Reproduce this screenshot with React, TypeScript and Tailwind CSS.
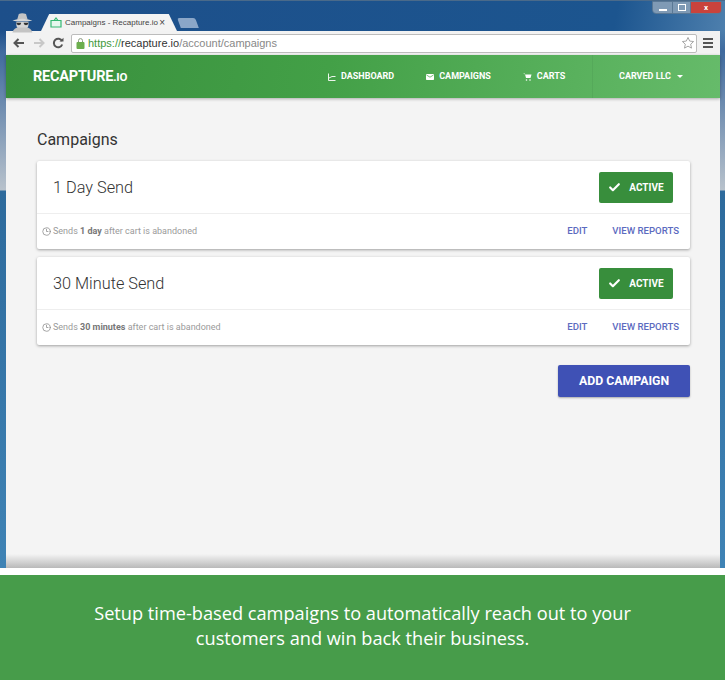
import { Check, Clock3 } from 'lucide-react';

const CAMPAIGNS = [
  { name: '1 Day Send', when: '1 day' },
  { name: '30 Minute Send', when: '30 minutes' },
];

function Incognito() {
  return (
    <svg width="24" height="22" viewBox="0 0 30 26">
      <path d="M9 10 L11 3 Q15 1 20 3 L22 10 Z" fill="#c4c4c4" />
      <path d="M3 11 Q15 7 28 11 Q15 14 3 11Z" fill="#d8d8d8" />
      <path d="M8 13 H23 Q24 20 19 23 H12 Q7 20 8 13Z" fill="#d6d6d6" />
      <path d="M3 26 Q5 20 11 20 H20 Q26 20 28 26Z" fill="#c4c4c4" />
      <path d="M8 14 H14 Q14 17 11 17 Q8 17 8 14Z M17 14 H23 Q23 17 20 17 Q17 17 17 14Z" fill="#333" />
    </svg>
  );
}

function CampaignCard({ name, when }: { name: string; when: string }) {
  return (
    <div className="bg-white rounded-[2px] shadow-[0_1px_3px_rgba(0,0,0,0.35)]">
      <div className="h-[53px] flex items-center justify-between pl-4 pr-[17px] border-b border-[#eeeeee]">
        <span className="pt-[2px] text-[16.3px] font-light text-[#333]">{name}</span>
        <span className="w-[74px] h-[31px] bg-[#388e3c] rounded-[2px] flex items-center justify-center gap-2 text-white text-[10px] font-bold">
          <Check size={13} strokeWidth={4} />
          ACTIVE
        </span>
      </div>
      <div className="h-[35px] flex items-center pl-[5px] pr-[11px] text-[9px]">
        <Clock3 size={9} className="text-[#888] mr-[2px]" />
        <span className="text-[#9a9a9a]">
          Sends <b className="text-[#777] font-bold">{when}</b> after cart is abandoned
        </span>
        <a className="ml-auto text-[#5c6bc0] text-[9.6px] font-medium">EDIT</a>
        <a className="ml-[25px] text-[#5c6bc0] text-[9.6px] font-medium">VIEW REPORTS</a>
      </div>
    </div>
  );
}

export default function App() {
  return (
    <div className="w-[725px] h-[680px] bg-white overflow-hidden font-['Roboto',sans-serif]">
      <div className="h-[568px] pl-[6px] pr-[5px] flex flex-col border-t border-[#4a6a8a] bg-[linear-gradient(to_bottom,transparent_30px,#3f6a9e_50px,#b8c2cc_189px,#2d6a9c_190px,#3f83b5_100%),linear-gradient(100deg,#1d4f8a_0%,#1c558f_75%,#5a8ab5_92%,#86a5c2_100%)]">
        <div className="h-[30px] flex items-end relative">
          <div className="ml-[4px] mb-[-2px]"><Incognito /></div>
          <div className="ml-[7px] w-[136px] h-[17px] bg-[#f3f3f3] [clip-path:polygon(0_100%,6%_0,94%_0,100%_100%)] flex items-center pl-[9px] pr-[12px] text-[8px] text-[#444] whitespace-nowrap font-['Liberation_Sans',sans-serif]">
            <svg width="12" height="11" viewBox="0 0 12 11" className="mr-[3px] shrink-0">
              <path d="M1 3.5 H11 V10 H1Z M4 3.5 L6 1 L8 3.5" fill="#e6f7ee" stroke="#35b873" strokeWidth="1.2" />
            </svg>
            Campaigns - Recapture.io
            <span className="ml-auto text-[10px] leading-none">×</span>
          </div>
          <div className="ml-[2px] mb-[3px] w-[18px] h-[10px] bg-[#8aa6c8] rounded-t-[2px] skew-x-[20deg]" />
          <div className="absolute top-0 right-[-2px] w-[70px] h-[13px] flex rounded-b-[4px] border border-[#5a7895] overflow-hidden">
            <span className="w-[19px] bg-[#7f9ab5] flex items-end justify-center pb-[2px]"><i className="w-[8px] h-[2px] bg-white" /></span>
            <span className="w-[19px] bg-[#7f9ab5] border-x border-[#5a7895] flex items-center justify-center"><i className="w-[8px] h-[7px] border border-white" /></span>
            <span className="flex-1 bg-[#c9433c] text-white text-[8px] font-bold leading-[12px] text-center">x</span>
          </div>
        </div>
        <div className="h-[24px] bg-[#f2f2f2] flex items-center pl-[7px] pr-[7px] text-[#555]">
          <svg width="12" height="10" viewBox="0 0 12 10"><path d="M11 5H2M5.5 1 L1.5 5 L5.5 9" fill="none" stroke="#555" strokeWidth="2" /></svg>
          <svg width="12" height="10" viewBox="0 0 12 10" className="ml-[8px]"><path d="M1 5H10M6.5 1 L10.5 5 L6.5 9" fill="none" stroke="#c8c8c8" strokeWidth="2" /></svg>
          <svg width="12" height="12" viewBox="0 0 12 12" className="ml-[7px]"><path d="M10 4 A4.3 4.3 0 1 0 10.2 7.5" fill="none" stroke="#555" strokeWidth="2" /><path d="M7.5 4.5 H11.5 V0.8Z" fill="#555" /></svg>
          <div className="ml-[7px] w-[626px] h-[19px] bg-white border border-[#bcbcbc] rounded-[2px] flex items-center pl-[4px] text-[11px] font-['Liberation_Sans',sans-serif]">
            <svg width="9" height="11" viewBox="0 0 9 11" className="mr-[3px]"><rect x="0.5" y="4" width="8" height="7" rx="1" fill="#6cae4e" /><path d="M2.5 4 V2.6 A2 2 0 0 1 6.5 2.6 V4" fill="none" stroke="#8a9a80" strokeWidth="1" /></svg>
            <span className="text-[#3f9a3c]">https://</span>
            <span className="text-[#333]">recapture.io</span>
            <span className="text-[#888]">/account/campaigns</span>
            <svg width="14" height="14" viewBox="0 0 24 24" className="ml-auto mr-[1px]"><path d="M12 2.5l2.9 6.2 6.7.8-5 4.6 1.4 6.7L12 17.4l-6 3.4 1.4-6.7-5-4.6 6.7-.8z" fill="none" stroke="#999" strokeWidth="1.5" /></svg>
          </div>
          <div className="ml-[6px] w-[10px] flex flex-col gap-[2px]">
            <i className="h-[2px] bg-[#555]" /><i className="h-[2px] bg-[#555]" /><i className="h-[2px] bg-[#555]" />
          </div>
        </div>
        <div className="flex-1 flex flex-col bg-[#f4f4f4] relative">
          <nav className="h-[43px] shrink-0 flex items-center text-white text-[9px] font-bold bg-[linear-gradient(100deg,#388e3c_0%,#43a047_45%,#66bb6a_100%)] shadow-[0_1px_3px_rgba(0,0,0,0.3)]">
            <span className="ml-[27px] w-[100px] text-[14.5px] font-bold tracking-[-0.2px] whitespace-nowrap">RECAPTURE<span className="text-[11.5px]">.IO</span></span>
            <span className="ml-[195px] flex items-center gap-[5px]">
              <svg width="8" height="8" viewBox="0 0 8 8"><path d="M0.5 0.5 V7.5 H7.5 M1 5 L4 3.5 H7.5" fill="none" stroke="white" strokeWidth="0.9" /></svg>
              DASHBOARD
            </span>
            <span className="ml-[32px] flex items-center gap-[5px]">
              <svg width="8" height="6" viewBox="0 0 8 6"><rect width="8" height="6" rx="0.8" fill="white" /><path d="M0.5 1 L4 3.2 L7.5 1" fill="none" stroke="#58ab5c" strokeWidth="0.8" /></svg>
              CAMPAIGNS
            </span>
            <span className="ml-[32px] flex items-center gap-[5px]">
              <svg width="9" height="8" viewBox="0 0 9 8"><path d="M0 0.5 H1.8 L3 5 H7.5 L8.5 1.5 H2.3Z" fill="white" /><circle cx="3.5" cy="7" r="0.8" fill="white" /><circle cx="7" cy="7" r="0.8" fill="white" /></svg>
              CARTS
            </span>
            <span className="ml-auto w-[128px] h-full border-l border-[#55a95a] flex items-center pl-[26px] gap-[6px]">
              CARVED LLC
              <i className="border-x-[3px] border-x-transparent border-t-[3px] border-t-white" />
            </span>
          </nav>
          <main className="flex-1 pl-[31px] pr-[30px] pt-[32px] flex flex-col">
            <h1 className="text-[16px] leading-[20px] text-[#333] font-normal">Campaigns</h1>
            <div className="mt-[11px] flex flex-col gap-[8px]">
              {CAMPAIGNS.map(c => <CampaignCard key={c.name} {...c} />)}
            </div>
            <button className="mt-[20px] self-end w-[132px] h-[32px] bg-[#3f51b5] rounded-[2px] text-white text-[12.3px] font-bold shadow-[0_1px_2px_rgba(0,0,0,0.3)]">
              ADD CAMPAIGN
            </button>
          </main>
          <div className="h-[14px] shrink-0 bg-[linear-gradient(to_bottom,#f4f4f4,#b9b9b9)]" />
        </div>
      </div>
      <div className="mt-[7px] h-[105px] pb-[4px] bg-[#479c4a] flex items-center justify-center text-center text-white text-[18.2px] leading-[25px] font-['Open_Sans',sans-serif]">
        <p>Setup time-based campaigns to automatically reach out to your<br />customers and win back their business.</p>
      </div>
    </div>
  );
}
